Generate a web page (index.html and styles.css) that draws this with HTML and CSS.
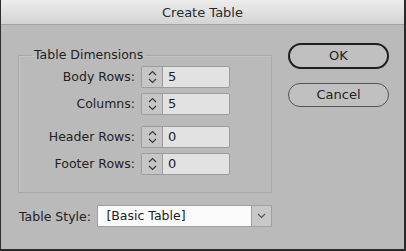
FILE: index.html
```html
<!DOCTYPE html>
<html>
<head>
<meta charset="utf-8">
<link rel="stylesheet" href="styles.css">
</head>
<body>
<div class="window">
  <div class="titlebar">Create Table</div>
  <div class="content">
    <div class="left">
      <fieldset class="group">
        <legend>Table Dimensions</legend>
        <div class="grid">
          <label class="lbl">Body Rows:</label>
          <div class="spinner"><div class="stepper"><svg width="11" height="16" viewBox="0 0 11 16"><path d="M2 6 L5.5 2.5 L9 6 M2 10 L5.5 13.5 L9 10" fill="none" stroke="#3a3a3a" stroke-width="1.2"/></svg></div><div class="val">5</div></div>
          <label class="lbl">Columns:</label>
          <div class="spinner"><div class="stepper"><svg width="11" height="16" viewBox="0 0 11 16"><path d="M2 6 L5.5 2.5 L9 6 M2 10 L5.5 13.5 L9 10" fill="none" stroke="#3a3a3a" stroke-width="1.2"/></svg></div><div class="val">5</div></div>
        </div>
        <div class="grid second">
          <label class="lbl">Header Rows:</label>
          <div class="spinner"><div class="stepper"><svg width="11" height="16" viewBox="0 0 11 16"><path d="M2 6 L5.5 2.5 L9 6 M2 10 L5.5 13.5 L9 10" fill="none" stroke="#3a3a3a" stroke-width="1.2"/></svg></div><div class="val">0</div></div>
          <label class="lbl">Footer Rows:</label>
          <div class="spinner"><div class="stepper"><svg width="11" height="16" viewBox="0 0 11 16"><path d="M2 6 L5.5 2.5 L9 6 M2 10 L5.5 13.5 L9 10" fill="none" stroke="#3a3a3a" stroke-width="1.2"/></svg></div><div class="val">0</div></div>
        </div>
      </fieldset>
      <div class="stylerow">
        <label class="stylelbl">Table Style:</label>
        <div class="select"><div class="selval">[Basic Table]</div><div class="drop"><svg width="9" height="6" viewBox="0 0 9 6"><path d="M1 1 L4.5 4.5 L8 1" fill="none" stroke="#555" stroke-width="1.2"/></svg></div></div>
      </div>
    </div>
    <div class="buttons">
      <div class="btn ok">OK</div>
      <div class="btn cancel">Cancel</div>
    </div>
  </div>
</div>
</body>
</html>
```
FILE: styles.css
```css
html, body {
  margin: 0;
  padding: 0;
  background: #2a2a2a;
}
body {
  width: 406px;
  height: 251px;
  overflow: hidden;
  font-family: "DejaVu Sans", sans-serif;
  color: #222;
}
.window {
  box-sizing: border-box;
  width: 406px;
  height: 251px;
  border-left: 1px solid #2e2e2e;
  border-right: 2px solid #2a2a2a;
  border-bottom: 2px solid #2a2a2a;
  background: #bababa;
  display: flex;
  flex-direction: column;
}
.titlebar {
  height: 24px;
  line-height: 25px;
  text-align: center;
  font-size: 13px;
  color: #2a2a2a;
  background: linear-gradient(#ececec, #d4d4d4);
  border-bottom: 1px solid #a3a3a3;
}
.content {
  display: flex;
  flex: 1;
}
.left {
  margin-left: 17px;
  width: 254px;
  display: flex;
  flex-direction: column;
}
.group {
  margin: 22px 0 0 0;
  padding: 3px 0 17px 0;
  border: 1px solid #a9a9a9;
  box-shadow: inset 1px 1px 0 #c4c4c4;
  min-width: 0;
}
.group legend {
  margin-left: 13px;
  padding: 0 2px;
  font-size: 12.5px;
  line-height: 16px;
}
.grid {
  display: grid;
  grid-template-columns: 116px 89px;
  grid-auto-rows: 22px;
  column-gap: 6px;
  row-gap: 5px;
}
.grid.second {
  margin-top: 11px;
}
.lbl {
  font-size: 12.5px;
  text-align: right;
  line-height: 22px;
}
.spinner {
  box-sizing: border-box;
  height: 22px;
  border: 1px solid #9c9c9c;
  border-radius: 2px;
  display: flex;
  background: #e2e2e2;
}
.stepper {
  width: 20px;
  border-right: 1px solid #9c9c9c;
  background: #c6c6c6;
  display: flex;
  align-items: center;
  justify-content: center;
}
.val {
  padding-left: 5px;
  font-size: 13px;
  line-height: 20px;
}
.stylerow {
  display: flex;
  align-items: center;
  margin-top: 12px;
}
.stylelbl {
  font-size: 12.5px;
  margin-left: 1px;
  width: 79px;
}
.select {
  box-sizing: border-box;
  width: 176px;
  height: 22px;
  border: 1px solid #a0a0a0;
  display: flex;
  background: #fbfbfb;
}
.selval {
  flex: 1;
  padding-left: 8px;
  font-size: 12.5px;
  line-height: 20px;
}
.drop {
  width: 19px;
  border-left: 1px solid #a0a0a0;
  background: #c8c8c8;
  display: flex;
  align-items: center;
  justify-content: center;
}
.buttons {
  margin-left: 16px;
  margin-top: 18px;
  display: flex;
  flex-direction: column;
}
.btn {
  box-sizing: border-box;
  width: 101px;
  text-align: center;
  font-size: 13px;
  background: #c0c0c0;
}
.ok {
  height: 26px;
  line-height: 22px;
  border: 2px solid #1e1e1e;
  border-radius: 13px;
}
.cancel {
  height: 24px;
  line-height: 22px;
  margin-top: 14px;
  border: 1px solid #555;
  border-radius: 12px;
}
```
